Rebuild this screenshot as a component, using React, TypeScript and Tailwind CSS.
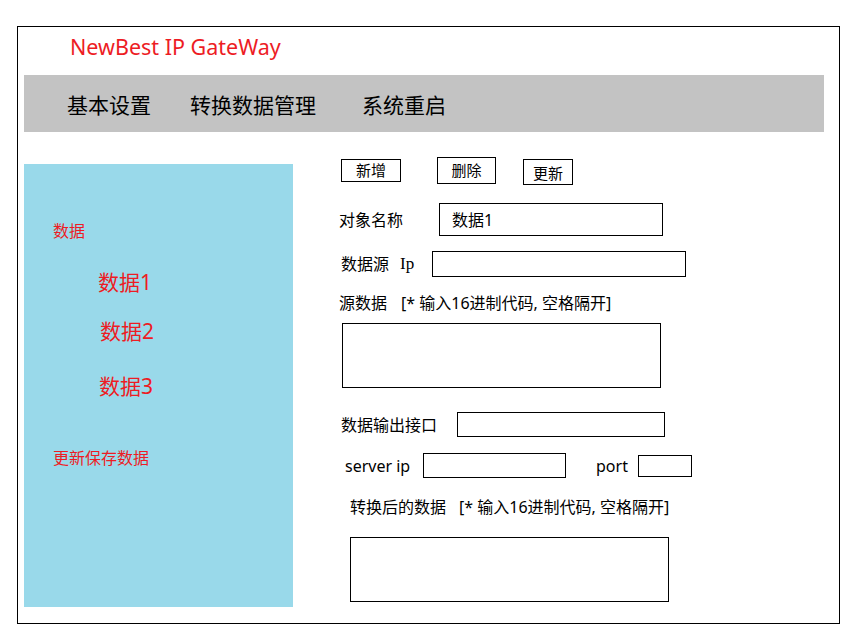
import React from 'react'

const sans = { fontFamily: '"Noto Sans", "Noto Sans CJK SC", sans-serif' }

function Box({ className }: { className: string }) {
  return <div className={`border border-black bg-white ${className}`} />
}

export default function App() {
  return (
    <div className="w-[865px] h-[638px] bg-white overflow-hidden" style={sans}>
      <div className="ml-[17px] mt-[26px] w-[823px] h-[598px] border border-black flex flex-col">
        {/* 标题 */}
        <div className="ml-[52px] mt-[4px] h-[32px] text-[21.5px] leading-[32px] text-[#ed1c24]">
          NewBest IP GateWay
        </div>

        {/* 顶部导航 */}
        <div className="ml-[6px] mt-[12px] w-[800px] h-[57px] pt-[4px] bg-[#c3c3c3] flex items-center text-[21px] text-black">
          <span className="ml-[43px]">基本设置</span>
          <span className="ml-[39px]">转换数据管理</span>
          <span className="ml-[46px]">系统重启</span>
        </div>

        <div className="flex mt-[25px]">
          {/* 左侧列表 */}
          <div className="ml-[6px] mt-[7px] w-[269px] h-[443px] bg-[#99d9ea] flex flex-col text-[#ed1c24]">
            <span className="ml-[29px] mt-[56px] text-[16px] leading-[22px]">数据</span>
            <span className="ml-[74px] mt-[26px] text-[21px] leading-[28px]">数据1</span>
            <span className="ml-[76px] mt-[21px] text-[21px] leading-[28px]">数据2</span>
            <span className="ml-[75px] mt-[27px] text-[21px] leading-[28px]">数据3</span>
            <span className="ml-[29px] mt-[47px] text-[16px] leading-[22px]">更新保存数据</span>
          </div>

          {/* 右侧表单 */}
          <div className="ml-[46px] flex flex-col text-[16px] text-black">
            <div className="h-[28px] flex items-start text-[15px]">
              <div className="ml-[2px] mt-[2px] w-[60px] h-[23px] border border-black flex items-center justify-center leading-none">新增</div>
              <div className="ml-[36px] w-[59px] h-[27px] border border-black flex items-center justify-center leading-none">删除</div>
              <div className="ml-[27px] mt-[2px] w-[50px] h-[26px] border border-black flex items-center justify-center leading-none pt-[3px]">更新</div>
            </div>

            <div className="mt-[18px] h-[33px] flex items-center">
              <span className="w-[100px]">对象名称</span>
              <div className="w-[224px] h-[33px] border border-black flex items-center pl-[12px]">数据1</div>
            </div>

            <div className="mt-[15px] h-[26px] flex items-center">
              <span className="ml-[2px]">数据源</span>
              <span className="ml-[11px] text-[17px]" style={{ fontFamily: '"Liberation Serif", serif' }}>Ip</span>
              <Box className="ml-[18px] w-[254px] h-[26px]" />
            </div>

            <div className="mt-[16px] h-[20px] flex items-center">
              <span>源数据</span>
              <span className="ml-[14px]">[* 输入16进制代码, 空格隔开]</span>
            </div>

            <Box className="mt-[10px] ml-[3px] w-[319px] h-[65px]" />

            <div className="mt-[24px] h-[25px] flex items-center">
              <span className="ml-[2px]">数据输出接口</span>
              <Box className="ml-[20px] w-[208px] h-[25px]" />
            </div>

            <div className="mt-[16px] h-[25px] flex items-center">
              <span className="ml-[6px] w-[78px]">server ip</span>
              <Box className="w-[143px] h-[25px]" />
              <span className="ml-[30px] w-[42px]">port</span>
              <Box className="w-[54px] h-[22px]" />
            </div>

            <div className="mt-[19px] h-[20px] flex items-center">
              <span className="ml-[11px]">转换后的数据</span>
              <span className="ml-[13px]">[* 输入16进制代码, 空格隔开]</span>
            </div>

            <Box className="mt-[20px] ml-[11px] w-[319px] h-[65px]" />
          </div>
        </div>
      </div>
    </div>
  )
}
